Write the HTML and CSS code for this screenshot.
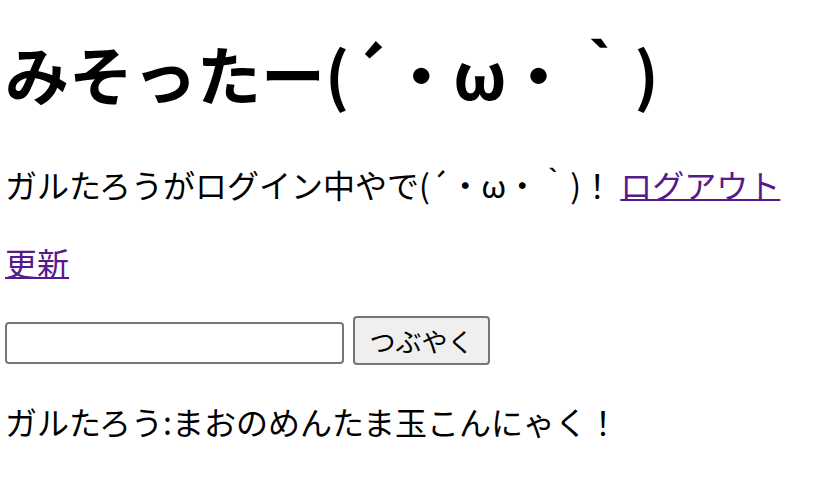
FILE: index.html
```html
<!DOCTYPE html>
<html lang="ja">
<head>
<meta charset="utf-8">
<title>みそったー</title>
<link rel="stylesheet" href="styles.css">
</head>
<body>
<h1 class="title">みそったー(´・ω・｀)</h1>
<p class="status">ガルたろうがログイン中やで(´・ω・｀)！ <a class="link" href="#">ログアウト</a></p>
<p class="refresh"><a class="link" href="#">更新</a></p>
<form class="post-form">
  <input class="post-input" type="text">
  <button class="post-button" type="button">つぶやく</button>
</form>
<p class="tweet">ガルたろう:まおのめんたま玉こんにゃく！</p>
</body>
</html>
```
FILE: styles.css
```css
html, body {
  margin: 0;
  padding: 0;
  background: #ffffff;
}
body {
  padding: 0 5px;
  font-family: "Noto Sans CJK JP", "Noto Sans", sans-serif;
  font-size: 32px;
  color: #000000;
}
.title {
  margin: 40px 0 0 0;
  font-size: 64px;
  line-height: 64px;
  font-weight: bold;
}
.status {
  margin: 56px 0 0 0;
  line-height: 48px;
}
.refresh {
  margin: 30px 0 0 0;
  line-height: 48px;
}
.link {
  color: #551a8b;
  text-decoration: underline;
  text-decoration-thickness: 2px;
}
.post-form {
  margin: 30px 0 0 0;
  display: flex;
  align-items: flex-end;
  gap: 9px;
}
.post-input {
  box-sizing: border-box;
  width: 339px;
  height: 42px;
  margin: 0 0 1px 0;
  border: 2px solid #767676;
  border-radius: 4px;
  background: #ffffff;
  padding: 0 4px;
  font-size: 26px;
}
.post-button {
  box-sizing: border-box;
  width: 137px;
  height: 49px;
  border: 2px solid #767676;
  border-radius: 4px;
  background: #efefef;
  font-family: "Noto Sans CJK JP", "Noto Sans", sans-serif;
  font-size: 26px;
  color: #000000;
  padding: 0;
}
.tweet {
  margin: 32px 0 0 0;
  line-height: 48px;
}
```
